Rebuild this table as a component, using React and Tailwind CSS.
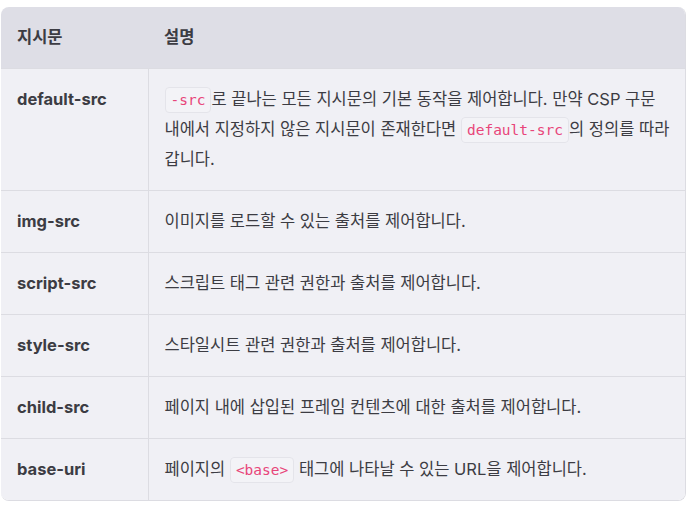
import React from 'react';

const Code = ({ children }) => (
  <code className="rounded-[4px] border border-[#e4e4ea] bg-[#f3f3f7] px-[5px] py-[4px] font-['DejaVu_Sans_Mono',monospace] text-[14.5px] leading-none text-[#e8457a]">
    {children}
  </code>
);

const rows = [
  {
    name: 'default-src',
    desc: (
      <>
        <Code>-src</Code>로 끝나는 모든 지시문의 기본 동작을 제어합니다. 만약 CSP 구문 내에서 지정하지 않은 지시문이 존재한다면{' '}
        <Code>default-src</Code>의 정의를 따라 갑니다.
      </>
    ),
  },
  { name: 'img-src', desc: '이미지를 로드할 수 있는 출처를 제어합니다.' },
  { name: 'script-src', desc: '스크립트 태그 관련 권한과 출처를 제어합니다.' },
  { name: 'style-src', desc: '스타일시트 관련 권한과 출처를 제어합니다.' },
  { name: 'child-src', desc: '페이지 내에 삽입된 프레임 컨텐츠에 대한 출처를 제어합니다.' },
  {
    name: 'base-uri',
    desc: (
      <>
        페이지의 <Code>&lt;base&gt;</Code> 태그에 나타날 수 있는 URL을 제어합니다.
      </>
    ),
  },
];

export default function App() {
  return (
    <div className="min-h-screen bg-white pl-[1px] pr-[6px] pt-[7px] font-['Inter','Noto_Sans_CJK_KR',sans-serif] text-[16.5px] text-[#3c3c43]">
      <div className="overflow-hidden rounded-[8px] border-b border-r border-[#dcdce2]">
        <table className="w-full border-collapse">
          <thead>
            <tr className="bg-[#dedee6] text-left">
              <th className="h-[61px] w-[147px] px-4 font-bold">지시문</th>
              <th className="px-4 font-bold">설명</th>
            </tr>
          </thead>
          <tbody className="bg-[#f0f0f5]">
            {rows.map((r) => (
              <tr key={r.name} className="border-t border-[#dcdce2] align-top">
                <td className="w-[147px] border-r border-[#dcdce2] px-4 py-[15.5px] font-bold leading-[30px]">{r.name}</td>
                <td className="break-keep py-[15.5px] pl-4 pr-[10px] leading-[30px]">{r.desc}</td>
              </tr>
            ))}
          </tbody>
        </table>
      </div>
    </div>
  );
}
